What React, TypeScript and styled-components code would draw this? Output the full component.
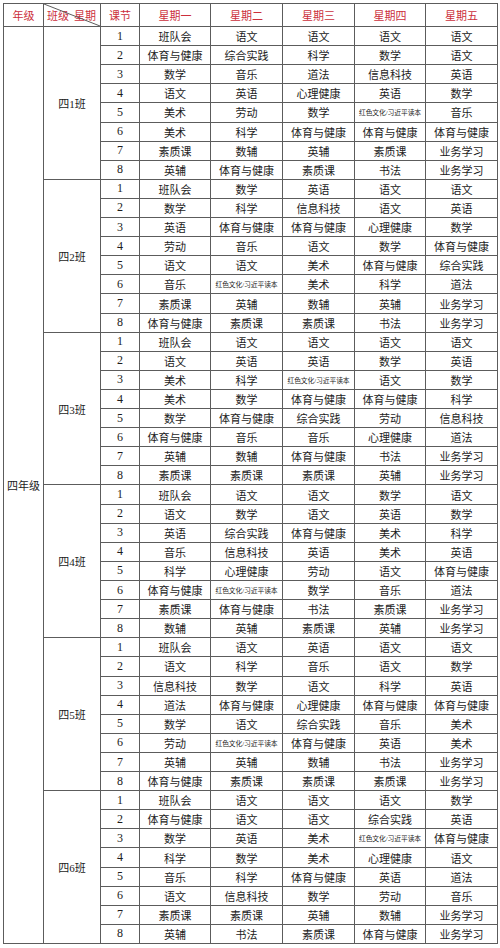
import React from "react";
import styled, { createGlobalStyle } from "styled-components";

const Global = createGlobalStyle`
  html, body { margin: 0; padding: 0; background: #ffffff; }
  body { font-family: "Liberation Serif", "Noto Sans CJK SC", serif; }
`;

const LINE = "#5c5c5c";
const RED = "#cc2f3c";

const Page = styled.div`
  padding: 3px 0 0 3px;
  width: 500px;
  box-sizing: border-box;
`;

const Grid = styled.div`
  display: grid;
  grid-template-columns: 40px 57px 39px 71px 72px 72px 71px 72px;
  grid-template-rows: 23px repeat(48, 1fr);
  height: 941px;
  width: 495px;
  box-sizing: border-box;
  border-top: 1px solid ${LINE};
  border-left: 1px solid ${LINE};
`;

const Cell = styled.div<{ $span?: number; $small?: boolean; $head?: boolean }>`
  box-sizing: border-box;
  border-right: 1px solid ${LINE};
  border-bottom: 1px solid ${LINE};
  display: flex;
  align-items: center;
  justify-content: center;
  white-space: nowrap;
  overflow: hidden;
  color: ${(p) => (p.$head ? RED : "#1c1c1c")};
  font-family: "Liberation Serif", "Noto Sans CJK SC", serif;
  font-size: ${(p) => (p.$small ? "6.8px" : "11px")};
  letter-spacing: ${(p) => (p.$small ? "-0.1px" : "0")};
  grid-row: ${(p) => (p.$span ? `span ${p.$span}` : "auto")};
`;

const NumCell = styled(Cell)`
  font-size: 12px;
`;

const DiagCell = styled(Cell)`
  position: relative;
  justify-content: space-between;
  padding: 0 4px 0 3px;
`;

const Diag = styled.svg`
  position: absolute;
  inset: 0;
  width: 100%;
  height: 100%;
  pointer-events: none;
`;

const SMALL = "红色文化/习近平读本";

const groups: { name: string; rows: string[][] }[] = [
  {
    name: "四1班",
    rows: [
      ["班队会", "语文", "语文", "语文", "语文"],
      ["体育与健康", "综合实践", "科学", "数学", "语文"],
      ["数学", "音乐", "道法", "信息科技", "英语"],
      ["语文", "英语", "心理健康", "英语", "数学"],
      ["美术", "劳动", "数学", SMALL, "音乐"],
      ["美术", "科学", "体育与健康", "体育与健康", "体育与健康"],
      ["素质课", "数辅", "英辅", "素质课", "业务学习"],
      ["英辅", "体育与健康", "素质课", "书法", "业务学习"],
    ],
  },
  {
    name: "四2班",
    rows: [
      ["班队会", "数学", "英语", "语文", "语文"],
      ["数学", "科学", "信息科技", "语文", "英语"],
      ["英语", "体育与健康", "体育与健康", "心理健康", "数学"],
      ["劳动", "音乐", "语文", "数学", "体育与健康"],
      ["语文", "语文", "美术", "体育与健康", "综合实践"],
      ["音乐", SMALL, "美术", "科学", "道法"],
      ["素质课", "英辅", "数辅", "英辅", "业务学习"],
      ["体育与健康", "素质课", "素质课", "书法", "业务学习"],
    ],
  },
  {
    name: "四3班",
    rows: [
      ["班队会", "语文", "语文", "语文", "语文"],
      ["语文", "英语", "英语", "数学", "英语"],
      ["美术", "科学", SMALL, "语文", "数学"],
      ["美术", "数学", "体育与健康", "体育与健康", "科学"],
      ["数学", "体育与健康", "综合实践", "劳动", "信息科技"],
      ["体育与健康", "音乐", "音乐", "心理健康", "道法"],
      ["英辅", "数辅", "体育与健康", "书法", "业务学习"],
      ["素质课", "素质课", "素质课", "英辅", "业务学习"],
    ],
  },
  {
    name: "四4班",
    rows: [
      ["班队会", "语文", "语文", "数学", "语文"],
      ["语文", "数学", "语文", "英语", "数学"],
      ["英语", "综合实践", "体育与健康", "美术", "科学"],
      ["音乐", "信息科技", "英语", "美术", "英语"],
      ["科学", "心理健康", "劳动", "语文", "体育与健康"],
      ["体育与健康", SMALL, "数学", "音乐", "道法"],
      ["素质课", "体育与健康", "书法", "素质课", "业务学习"],
      ["数辅", "英辅", "素质课", "英辅", "业务学习"],
    ],
  },
  {
    name: "四5班",
    rows: [
      ["班队会", "语文", "英语", "语文", "语文"],
      ["语文", "科学", "音乐", "语文", "数学"],
      ["信息科技", "数学", "语文", "科学", "英语"],
      ["道法", "体育与健康", "心理健康", "体育与健康", "体育与健康"],
      ["数学", "语文", "综合实践", "音乐", "美术"],
      ["劳动", SMALL, "体育与健康", "英语", "美术"],
      ["英辅", "英辅", "数辅", "书法", "业务学习"],
      ["体育与健康", "素质课", "素质课", "素质课", "业务学习"],
    ],
  },
  {
    name: "四6班",
    rows: [
      ["班队会", "语文", "语文", "语文", "数学"],
      ["体育与健康", "语文", "语文", "综合实践", "英语"],
      ["数学", "英语", "美术", SMALL, "体育与健康"],
      ["科学", "数学", "美术", "心理健康", "语文"],
      ["音乐", "科学", "体育与健康", "英语", "道法"],
      ["语文", "信息科技", "数学", "劳动", "音乐"],
      ["素质课", "素质课", "英辅", "数辅", "业务学习"],
      ["英辅", "书法", "素质课", "体育与健康", "业务学习"],
    ],
  },
];

const days = ["星期一", "星期二", "星期三", "星期四", "星期五"];

export default function App() {
  return (
    <>
      <Global />
      <Page>
        <Grid>
          <Cell $head>年级</Cell>
          <DiagCell $head>
            <Diag viewBox="0 0 56 22" preserveAspectRatio="none">
              <line x1="0" y1="0" x2="56" y2="22" stroke={LINE} strokeWidth="1" />
            </Diag>
            <span>班级</span>
            <span>星期</span>
          </DiagCell>
          <Cell $head>课节</Cell>
          {days.map((d) => (
            <Cell key={d} $head>
              {d}
            </Cell>
          ))}
          <Cell $span={48}>四年级</Cell>
          {groups.map((g) => (
            <React.Fragment key={g.name}>
              <Cell $span={8}>{g.name}</Cell>
              {g.rows.map((r, i) => (
                <React.Fragment key={i}>
                  <NumCell>{i + 1}</NumCell>
                  {r.map((s, j) => (
                    <Cell key={j} $small={s === SMALL}>
                      {s}
                    </Cell>
                  ))}
                </React.Fragment>
              ))}
            </React.Fragment>
          ))}
        </Grid>
      </Page>
    </>
  );
}
